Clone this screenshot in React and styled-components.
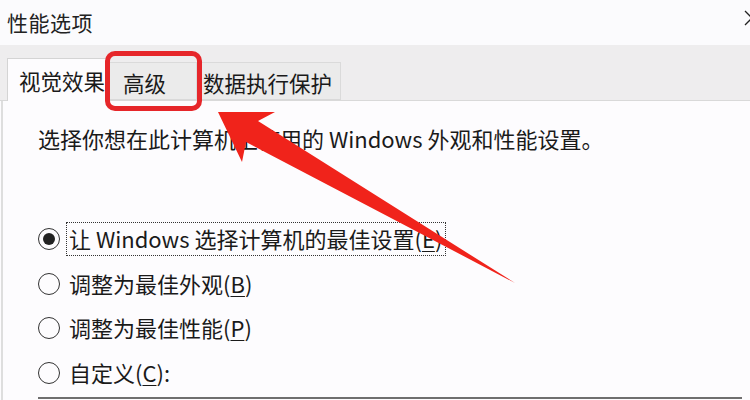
import styled, { createGlobalStyle } from 'styled-components';

const GlobalStyle = createGlobalStyle`
  html, body {
    margin: 0;
    padding: 0;
    background: #fdfcfe;
  }
  * {
    box-sizing: border-box;
  }
`;

const options = [
  { label: '让 Windows 选择计算机的最佳设置', key: 'E', checked: true, focused: true },
  { label: '调整为最佳外观', key: 'B' },
  { label: '调整为最佳性能', key: 'P' },
  { label: '自定义', key: 'C', suffix: ':' },
];

export default function App() {
  return (
    <>
      <GlobalStyle />
      <StyledWindow>
        <TitleBar>
          <span>性能选项</span>
          <CloseIcon viewBox="0 0 16 16">
            <path d="M1 1 L15 15 M15 1 L1 15" />
          </CloseIcon>
        </TitleBar>
        <TabStrip>
          <Tab $active $width={103} $pad={11}>视觉效果</Tab>
          <Tab $width={87} $pad={13}>高级</Tab>
          <Tab $width={144} $pad={6}>数据执行保护</Tab>
        </TabStrip>
        <Panel>
          <Intro>选择你想在此计算机上使用的 Windows 外观和性能设置。</Intro>
          <RadioList>
            {options.map((opt) => (
              <RadioRow key={opt.key}>
                <RadioCircle $checked={opt.checked} />
                <RadioLabel $focused={opt.focused}>
                  {opt.label}(<u>{opt.key}</u>){opt.suffix}
                </RadioLabel>
              </RadioRow>
            ))}
          </RadioList>
          <ListBoxTop />
        </Panel>
        <Highlight />
        <Arrow viewBox="0 0 750 400">
          <polygon points="218,112 275,112 258,121 515,283 246,142 242,162" />
        </Arrow>
      </StyledWindow>
    </>
  );
}

const StyledWindow = styled.div`
  position: relative;
  width: 750px;
  height: 400px;
  overflow: hidden;
  background: #fdfcfe;
  color: #1a1a1a;
  font-family: "Noto Sans CJK SC", "Noto Sans", sans-serif;
`;

const TitleBar = styled.div`
  height: 45px;
  display: flex;
  align-items: center;
  justify-content: space-between;
  padding-left: 7px;
  padding-bottom: 2px;
  background: #fbfbfd;
  font-size: 21px;
  letter-spacing: 0.5px;
  color: #222;
`;

const CloseIcon = styled.svg`
  width: 16px;
  height: 16px;
  margin-right: -10px;
  margin-bottom: 8px;
  stroke: #222;
  stroke-width: 1.3;
  fill: none;
`;

const TabStrip = styled.div`
  height: 56px;
  display: flex;
  align-items: flex-end;
  padding-left: 7px;
  background: #eeedee;
  border-bottom: 1px solid #d9d9d9;
`;

const Tab = styled.div`
  width: ${(p) => p.$width}px;
  height: ${(p) => (p.$active ? 43 : 38)}px;
  display: flex;
  align-items: center;
  padding-left: ${(p) => p.$pad}px;
  padding-top: ${(p) => (p.$active ? '0' : '2px')};
  margin-bottom: ${(p) => (p.$active ? '-1px' : '0')};
  background: ${(p) => (p.$active ? '#fdfcfe' : '#ebebeb')};
  border: 1px solid ${(p) => (p.$active ? '#d4d4d4' : '#dadada')};
  border-bottom: ${(p) => (p.$active ? 'none' : '1px solid #d9d9d9')};
  border-left: ${(p) => (p.$active ? '1px solid #d4d4d4' : 'none')};
  font-size: 21.5px;
  color: #1a1a1a;
`;

const Panel = styled.div`
  padding: 22px 0 0 35px;
  border-left: 2px solid #dedede;
  margin-left: 1px;
  height: 299px;
`;

const Intro = styled.div`
  font-size: 22px;
  line-height: 30px;
  color: #1a1a1a;
`;

const RadioList = styled.div`
  margin-top: 64px;
  display: flex;
  flex-direction: column;
`;

const RadioRow = styled.div`
  height: 44.5px;
  display: flex;
  align-items: center;
`;

const RadioCircle = styled.span`
  position: relative;
  width: 22px;
  height: 22px;
  flex: none;
  border-radius: 50%;
  border: 1.5px solid #333;
  background: #fdfcfe;
  &::after {
    content: '';
    display: ${(p) => (p.$checked ? 'block' : 'none')};
    position: absolute;
    left: 3.5px;
    top: 3.5px;
    width: 12px;
    height: 12px;
    border-radius: 50%;
    background: #222;
  }
`;

const RadioLabel = styled.span`
  margin-left: 6px;
  padding: 2px 3px 3px 2px;
  font-size: 22px;
  line-height: 27px;
  color: #1a1a1a;
  border: 1px dotted ${(p) => (p.$focused ? '#333' : 'transparent')};
  u {
    text-decoration-thickness: 1px;
    text-underline-offset: 3px;
  }
`;

const ListBoxTop = styled.div`
  margin-top: 2px;
  margin-right: 8px;
  height: 2px;
  background: #6f6f6f;
`;

const Highlight = styled.div`
  position: absolute;
  left: 105px;
  top: 51px;
  width: 97px;
  height: 60px;
  border: 5px solid #e6262a;
  border-radius: 10px;
`;

const Arrow = styled.svg`
  position: absolute;
  left: 0;
  top: 0;
  width: 750px;
  height: 400px;
  fill: #f0231b;
  pointer-events: none;
`;
